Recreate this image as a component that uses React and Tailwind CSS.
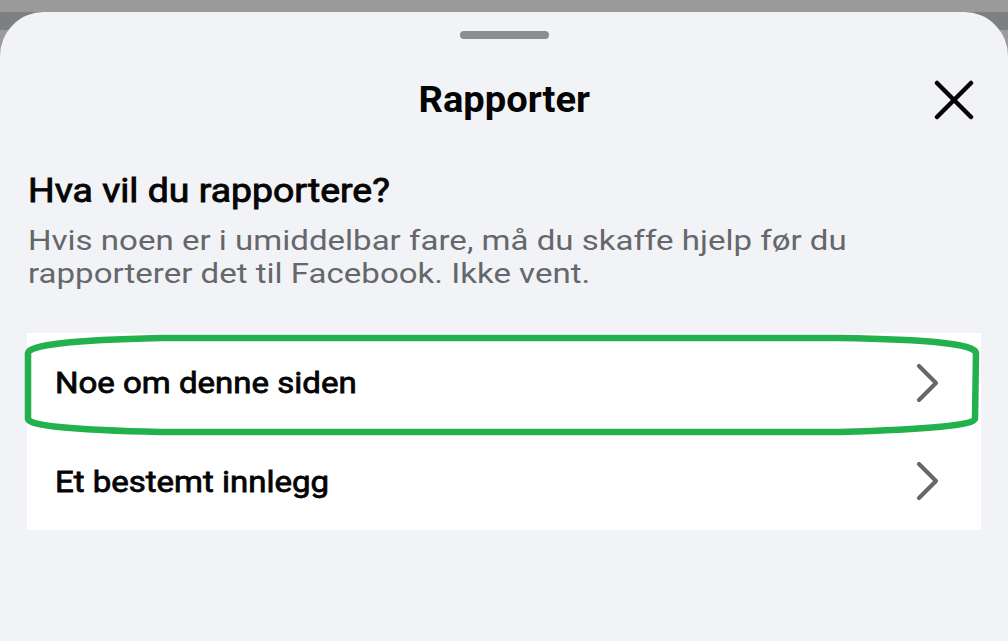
import React from "react";

function Chevron() {
  return (
    <svg width="26" height="42" viewBox="0 0 26 42" fill="none">
      <path d="M4 4 L21 21 L4 38" stroke="#65676b" strokeWidth="4.2" strokeLinecap="round" strokeLinejoin="round" />
    </svg>
  );
}

export default function App() {
  return (
    <div
      className="relative w-[1008px] h-[641px] overflow-hidden bg-[linear-gradient(to_bottom,#9a9a9a_12px,#7e7f82_12px,#7e7f82_30px,#9a9a9a_30px)]"
      style={{ fontFamily: "Roboto, 'Noto Sans', sans-serif" }}
    >
      <div className="mt-[12px] h-[629px] rounded-t-[44px] bg-[#f2f3f7] flex flex-col">
        <div className="flex justify-center pt-[19px]">
          <div className="w-[89px] h-[8px] rounded-full bg-[#8a8d91]" />
        </div>
        <div className="relative flex items-center justify-center h-[84px] mt-[19px]">
          <div className="text-[37px] font-bold text-[#050505] scale-x-[1.03] origin-center">Rapporter</div>
          <div className="absolute right-[34px] top-1/2 -translate-y-1/2">
            <svg width="40" height="40" viewBox="0 0 40 40" fill="none">
              <path d="M3 3 L37 37 M37 3 L3 37" stroke="#050505" strokeWidth="4.5" strokeLinecap="round" />
            </svg>
          </div>
        </div>
        <div className="px-[28px] mt-[26px]">
          <div className="text-[34px] font-normal [-webkit-text-stroke:0.9px_#050505] text-[#050505] leading-[44px] scale-x-[1.1] origin-left whitespace-nowrap">
            Hva vil du rapportere?
          </div>
          <div className="text-[28px] text-[#65676b] leading-[33px] mt-[12px] scale-x-[1.18] origin-left whitespace-nowrap">
            Hvis noen er i umiddelbar fare, må du skaffe hjelp før du
            <br />
            rapporterer det til Facebook. Ikke vent.
          </div>
        </div>
        <div className="mx-[27px] mt-[43px] bg-white">
          <div className="flex items-center justify-between h-[99px] pl-[28px] pr-[40px]">
            <span className="text-[30px] font-normal [-webkit-text-stroke:0.8px_#050505] text-[#050505] scale-x-[1.1] origin-left">
              Noe om denne siden
            </span>
            <Chevron />
          </div>
          <div className="flex items-center justify-between h-[98px] pl-[28px] pr-[40px]">
            <span className="text-[30px] font-normal [-webkit-text-stroke:0.8px_#050505] text-[#050505] scale-x-[1.1] origin-left">
              Et bestemt innlegg
            </span>
            <Chevron />
          </div>
        </div>
      </div>
      <svg className="absolute inset-0 pointer-events-none" width="1008" height="641" viewBox="0 0 1008 641" fill="none">
        <path
          d="M28 353 Q29 341 160 338 L840 338 Q975 340 976 353 L975 419 Q974 428 840 432 L160 432 Q30 429 28 419 Z"
          stroke="#22b14c"
          strokeWidth="6.5"
        />
      </svg>
    </div>
  );
}
